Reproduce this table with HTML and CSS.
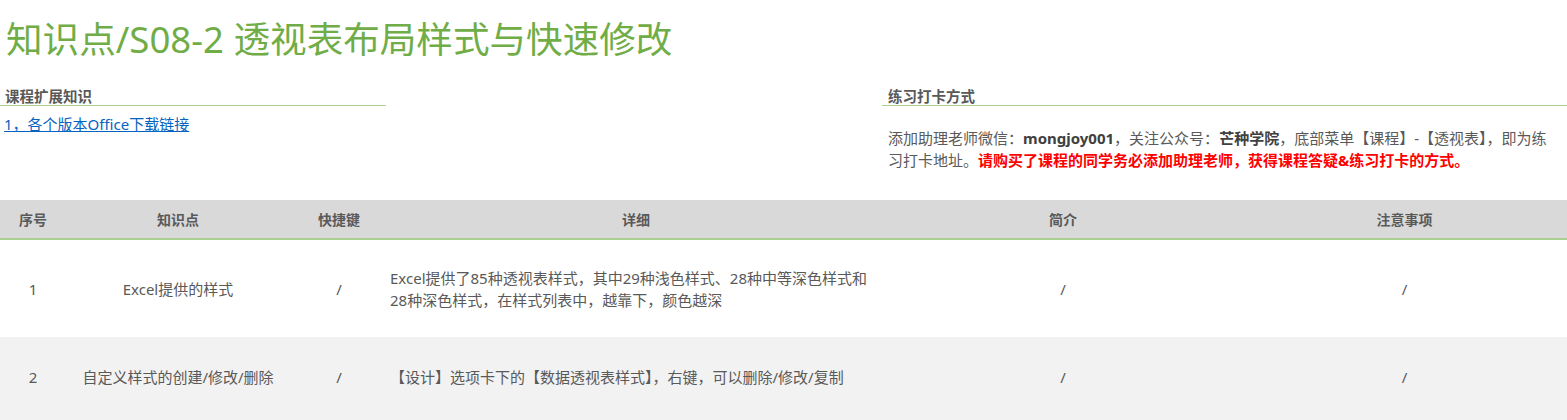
FILE: index.html
```html
<!DOCTYPE html>
<html lang="zh-CN">
<head>
    <meta charset="UTF-8">
    <meta name="viewport" content="width=device-width, initial-scale=1.0">
    <title>知识点/S08-2 透视表布局样式与快速修改</title>
    <link rel="stylesheet" href="styles.css">
</head>
<body>
    <h1 class="page-title">知识点/S08-2 透视表布局样式与快速修改</h1>

    <div class="info">
        <section class="info-left">
            <h2 class="info-heading">课程扩展知识</h2>
            <a class="info-link" href="#">1，各个版本Office下载链接</a>
        </section>
        <section class="info-right">
            <h2 class="info-heading">练习打卡方式</h2>
            <p class="info-text">添加助理老师微信：<b>mongjoy001</b>，关注公众号：<b>芒种学院</b>，底部菜单【课程】-【透视表】，即为练习打卡地址。<b class="warn">请购买了课程的同学务必添加助理老师，获得课程答疑&amp;练习打卡的方式。</b></p>
        </section>
    </div>

    <table class="points-table">
        <colgroup>
            <col class="col-no">
            <col class="col-name">
            <col class="col-key">
            <col class="col-detail">
            <col class="col-intro">
            <col class="col-note">
        </colgroup>
        <thead>
            <tr>
                <th>序号</th>
                <th>知识点</th>
                <th>快捷键</th>
                <th>详细</th>
                <th>简介</th>
                <th>注意事项</th>
            </tr>
        </thead>
        <tbody>
            <tr class="row-first">
                <td>1</td>
                <td>Excel提供的样式</td>
                <td>/</td>
                <td class="detail">Excel提供了85种透视表样式，其中29种浅色样式、28种中等深色样式和28种深色样式，在样式列表中，越靠下，颜色越深</td>
                <td>/</td>
                <td>/</td>
            </tr>
            <tr class="row-second">
                <td>2</td>
                <td>自定义样式的创建/修改/删除</td>
                <td>/</td>
                <td class="detail">【设计】选项卡下的【数据透视表样式】，右键，可以删除/修改/复制</td>
                <td>/</td>
                <td>/</td>
            </tr>
        </tbody>
    </table>
</body>
</html>
```

FILE: styles.css
```css
/* General */
body {
    margin: 0;
    font-family: "Noto Sans", "Noto Sans CJK SC", sans-serif;
    color: #595959;
    background-color: #fff;
}

/* Title */
.page-title {
    margin: 13px 0 0 6px;
    font-size: 36.6px;
    line-height: 52px;
    font-weight: normal;
    color: #70ad47; /* Excel green */
}

/* Info blocks */
.info {
    display: flex;
    margin-top: 22px;
}

.info-left {
    width: 386px;
}

.info-right {
    width: 685px;
    margin-left: auto;
}

.info-heading {
    margin: 0;
    padding-left: 5px;
    font-size: 14.5px;
    line-height: 18px;
    font-weight: bold;
    color: #595959;
    border-bottom: 1px solid #a9d08e;
}

.info-right .info-heading {
    padding-left: 6px;
}

.info-link {
    display: inline-block;
    margin: 7px 0 0 4px;
    font-size: 15px;
    line-height: 22px;
    color: #0563c1;
    text-decoration: underline;
}

.info-text {
    margin: 21px 0 0 6px;
    width: 672px;
    font-size: 15px;
    line-height: 22px;
}

.info-text b {
    color: #404040;
}

.info-text .warn {
    color: #ff0000;
}

/* Table */
.points-table {
    width: 100%;
    margin-top: 29px;
    border-collapse: collapse;
    table-layout: fixed;
    font-size: 15px;
}

.col-no { width: 66px; }
.col-name { width: 224px; }
.col-key { width: 98px; }
.col-detail { width: 496px; }
.col-intro { width: 358px; }
.col-note { width: 325px; }

.points-table th {
    height: 38px;
    padding: 0;
    background-color: #d9d9d9;
    border-bottom: 2px solid #a9d08e;
    font-size: 14px;
    font-weight: bold;
    color: #595959;
    text-align: center;
}

.points-table td {
    padding-left: 4px;
    padding-right: 4px;
    line-height: 22px;
    text-align: center;
    vertical-align: middle;
}

.points-table td.detail {
    padding-left: 2px;
    padding-right: 12px;
    text-align: left;
}

.row-first td {
    padding-top: 27px;
    padding-bottom: 26px;
}

.row-second td {
    padding-top: 29px;
    padding-bottom: 33px;
    background-color: #f2f2f2;
    vertical-align: top;
}
```
